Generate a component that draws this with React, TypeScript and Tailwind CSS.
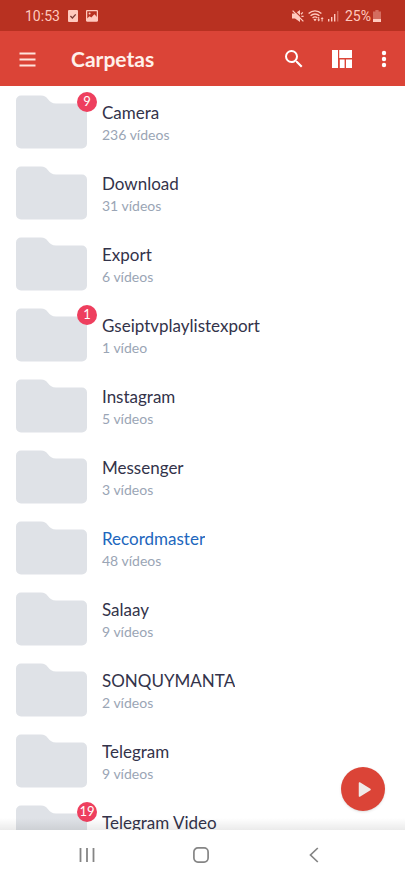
import React from "react";

type Folder = { name: string; count?: number; badge?: number; active?: boolean };

const folders: Folder[] = [
  { name: "Camera", count: 236, badge: 9 },
  { name: "Download", count: 31 },
  { name: "Export", count: 6 },
  { name: "Gseiptvplaylistexport", count: 1, badge: 1 },
  { name: "Instagram", count: 5 },
  { name: "Messenger", count: 3 },
  { name: "Recordmaster", count: 48, active: true },
  { name: "Salaay", count: 9 },
  { name: "SONQUYMANTA", count: 2 },
  { name: "Telegram", count: 9 },
  { name: "Telegram Video", badge: 19 },
];

function StatusBar() {
  return (
    <div className="flex h-[31px] shrink-0 items-center justify-between bg-[#b83121] pr-6 pl-[25px] font-[Roboto,sans-serif] text-sm text-[#ffc9be]">
      <div className="flex items-center gap-2">
        <span>10:53</span>
        <svg className="h-3 w-[10px]" viewBox="0 0 10 12" aria-hidden="true">
          <rect width="10" height="12" rx="1" fill="currentColor" />
          <path d="M2.4 6l2 2 3.3-3.6" fill="none" stroke="#7d3b35" strokeWidth="1.3" />
        </svg>
        <svg className="h-3 w-3" viewBox="0 0 12 12" aria-hidden="true">
          <rect x=".6" y=".6" width="10.8" height="10.4" rx=".8" fill="none" stroke="currentColor" strokeWidth="1.3" />
          <path d="M1 8.6l2.6-2.4 1.7 1.2L8.4 4.2 11 7v4H1z" fill="currentColor" />
          <circle cx="3.6" cy="3.6" r="1" fill="currentColor" />
        </svg>
      </div>
      <div className="flex items-center gap-1">
        <svg className="h-3 w-3" viewBox="0 0 12 12" aria-hidden="true">
          <path d="M0 3.600h3L8 0v12L3 8.400H0z" fill="currentColor" />
          <path d="M1.800 0L12 10.200" stroke="#b83121" strokeWidth="1.2" />
          <path d="M.6.600l10.800 10.800M9 4.200l1.800-1.800M9.400 6.400h2.200" stroke="currentColor" strokeWidth="1.3" />
        </svg>
        <svg className="h-3 w-4" viewBox="0 0 16 12" aria-hidden="true">
          <g fill="none" stroke="currentColor" strokeWidth="1.3">
            <path d="M.6 3.5c3.6-3.6 9.2-3.6 12.8 0M2.6 5.8c2.4-2.4 6.4-2.4 8.8 0M4.6 8c1.4-1.3 3.4-1.3 4.8 0" />
          </g>
          <path d="M5.4 9.6a2.3 2.3 0 013.2 0L7 11.3zM9.200 9.500h1V7h1v2.500h1l-1.500 2zM12.6 9l1.500-2 1.500 2h-1v2.500h-1V9z" fill="currentColor" />
        </svg>
        <svg className="h-3 w-[11px]" viewBox="0 0 11 12" aria-hidden="true">
          <path d="M0 9h1.4v2.5H0zM3 7h1.4v4.5H3zM6 4h1.4v7.5H6z" fill="currentColor" />
          <path d="M9 1h1.4v10.5H9z" fill="currentColor" opacity=".4" />
        </svg>
        <div className="flex items-center gap-0.5 pl-0.5">
          <span>25%</span>
          <svg className="h-3 w-2" viewBox="0 0 8 12" aria-hidden="true">
            <path d="M2.4 0h3.2v1.4H8V12H0V1.4h2.4z" fill="currentColor" opacity=".4" />
            <path d="M0 9h8v3H0z" fill="currentColor" />
          </svg>
        </div>
      </div>
    </div>
  );
}

function Header() {
  return (
    <header className="flex h-[55px] shrink-0 items-center bg-[#db4437] pr-[9px] pl-[15px] text-white">
      <button aria-label="Menú" className="text-[#ffe3dc]">
        <svg className="size-6" viewBox="0 0 24 24" aria-hidden="true">
          <path d="M4.500 6.500h16M4.500 12.500h16M4.500 18.500h16" stroke="currentColor" strokeWidth="1.8" />
        </svg>
      </button>
      <h1 className="flex-1 pl-8 text-[21px] font-bold text-[#fff0ea]">Carpetas</h1>
      <div className="flex items-center">
        <button aria-label="Buscar" className="mr-6">
          <svg className="size-6" viewBox="0 0 24 24" fill="currentColor" aria-hidden="true">
            <path d="M15.5 14h-.79l-.28-.27A6.47 6.47 0 0016 9.5 6.5 6.5 0 109.5 16c1.61 0 3.09-.59 4.23-1.57l.27.28v.79l5 4.99L20.49 19l-4.99-5zm-6 0C7.01 14 5 11.99 5 9.5S7.01 5 9.5 5 14 7.01 14 9.5 11.99 14 9.5 14z" />
          </svg>
        </button>
        <button aria-label="Vista" className="mr-[18px]">
          <svg className="size-6" viewBox="0 0 24 24" fill="currentColor" aria-hidden="true">
            <path d="M2 3h6v18H2zM9.2 3H22v8H9.2zM9.8 12.4h4.800V21H9.800zM16 12.4h6V21h-6z" />
          </svg>
        </button>
        <button aria-label="Más opciones">
          <svg className="size-6" viewBox="0 0 24 24" fill="currentColor" aria-hidden="true">
            <circle cx="12" cy="6" r="2.200" />
            <circle cx="12" cy="12" r="2.200" />
            <circle cx="12" cy="18" r="2.200" />
          </svg>
        </button>
      </div>
    </header>
  );
}

function FolderRow({ name, count, badge, active }: Folder) {
  return (
    <li>
      <button className="flex h-[71px] w-full items-start gap-[15px] px-4 pt-2 text-left">
        <span className="relative shrink-0 pt-px">
          <svg className="h-[54px] w-[71px]" viewBox="0 0 71 54" aria-hidden="true">
            <path
              d="M5 .5h20c3.500 0 5 1.200 7 3.800 2 2.500 4 4.200 8 4.200h26a5 5 0 015 5V48.500a5 5 0 01-5 5H5a5 5 0 01-5-5V5.500a5 5 0 015-5z"
              fill="#dfe2e7"
            />
          </svg>
          {badge !== undefined && (
            <span className="absolute -top-0.5 -right-[10px] flex size-5 items-center justify-center rounded-full bg-[#ee3f5e] text-[13px] text-white">
              {badge}
            </span>
          )}
        </span>
        <span className="flex min-w-0 flex-col pt-2">
          <span className={`truncate text-[17px] leading-[22px] ${active ? "text-[#2166bd]" : "text-[#33334a]"}`}>
            {name}
          </span>
          {count !== undefined && (
            <span className="text-sm leading-[22px] text-[#9aa5b5]">
              {count} {count === 1 ? "vídeo" : "vídeos"}
            </span>
          )}
        </span>
      </button>
    </li>
  );
}

function NavBar() {
  return (
    <nav className="flex h-12 shrink-0 items-center bg-white pt-0.5 pr-[34px] pl-[30px] text-[#858585]">
      <button aria-label="Recientes" className="flex flex-1 justify-center">
        <svg className="size-4" viewBox="0 0 16 16" aria-hidden="true">
          <path d="M1.500 1v14M8 1v14M14.500 1v14" stroke="currentColor" strokeWidth="1.8" />
        </svg>
      </button>
      <button aria-label="Inicio" className="flex flex-1 justify-center">
        <svg className="size-4" viewBox="0 0 16 16" aria-hidden="true">
          <rect x=".9" y=".9" width="14.200" height="14.200" rx="4" fill="none" stroke="currentColor" strokeWidth="1.7" />
        </svg>
      </button>
      <button aria-label="Atrás" className="flex flex-1 justify-center">
        <svg className="size-4" viewBox="0 0 16 16" aria-hidden="true">
          <path d="M11.800 1L4.500 8l7.300 7" fill="none" stroke="currentColor" strokeWidth="1.7" />
        </svg>
      </button>
    </nav>
  );
}

export default function App() {
  return (
    <div className="flex h-dvh flex-col overflow-hidden bg-white font-[Lato,sans-serif]">
      <StatusBar />
      <Header />
      <main className="relative min-h-0 flex-1 overflow-hidden">
        <ul>
          {folders.map((folder) => (
            <FolderRow key={folder.name} {...folder} />
          ))}
        </ul>
        <div className="pointer-events-none absolute inset-x-0 bottom-0 h-3 bg-linear-to-b from-transparent to-black/8" />
        <button
          aria-label="Reproducir"
          className="absolute right-5 bottom-[19px] flex size-11 items-center justify-center rounded-full bg-[#db4437] shadow-sm"
        >
          <svg className="size-6" viewBox="0 0 24 24" aria-hidden="true">
            <path d="M8.500 6l10.500 6.500-10.500 6.500z" fill="#f0eae8" stroke="#f0eae8" strokeWidth="1.500" strokeLinejoin="round" />
          </svg>
        </button>
      </main>
      <NavBar />
    </div>
  );
}
